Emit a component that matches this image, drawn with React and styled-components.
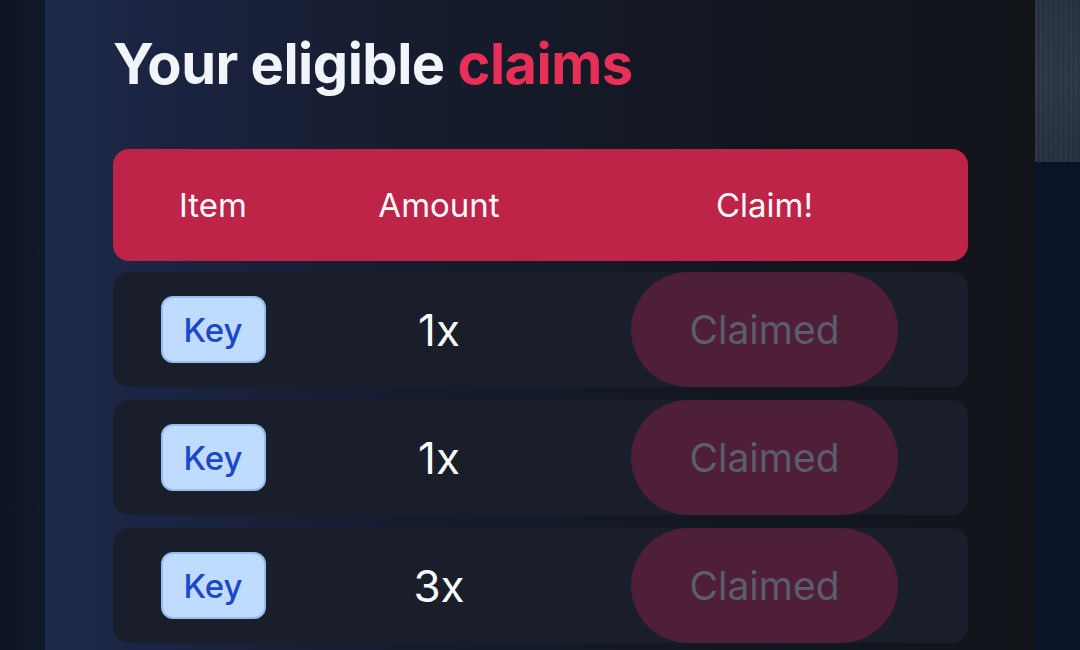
import React from 'react';
import styled, { createGlobalStyle } from 'styled-components';

const Global = createGlobalStyle`
  html, body { margin: 0; padding: 0; background: #0e1422; }
  body { font-family: Inter, "Noto Sans", sans-serif; }
`;

const claims = [
  { item: 'Key', amount: 1 },
  { item: 'Key', amount: 1 },
  { item: 'Key', amount: 3 },
];

const Page = styled.div`
  display: flex;
  width: 1080px;
  height: 650px;
  overflow: hidden;
`;

const LeftStrip = styled.div`
  width: 45px;
  flex: none;
  background: linear-gradient(90deg, #0d1320 0%, #111a2c 100%);
`;

const RightStrip = styled.div`
  width: 45px;
  flex: none;
  display: flex;
  flex-direction: column;
  background: #0b1329;
`;

const Texture = styled.div`
  height: 162px;
  background:
    repeating-linear-gradient(90deg, rgba(255,255,255,0.03) 0 2px, transparent 2px 5px),
    linear-gradient(180deg, #263041 0%, #2c3546 50%, #252e3e 100%);
`;

const Panel = styled.main`
  flex: 1;
  padding: 24px 0 0 68px;
  background: linear-gradient(90deg, #1e2a4b 0%, #1a2340 12%, #161c2c 40%, #121620 70%, #111419 100%);
`;

const Title = styled.h1`
  margin: 0 0 44px;
  font-size: 56px;
  line-height: 81px;
  font-weight: 700;
  color: #f1f5f9;
  letter-spacing: -0.5px;
`;

const Accent = styled.span`
  color: #e72f58;
`;

const Table = styled.div`
  width: 855px;
  display: flex;
  flex-direction: column;
  gap: 13px;
`;

const Row = styled.div`
  display: grid;
  grid-template-columns: 200px 252px 399px;
  align-items: center;
  height: ${p => (p.$head ? '112px' : '115px')};
  border-radius: 16px;
  background: ${p => (p.$head ? '#be2448' : '#1a1e2a')};
  margin-bottom: ${p => (p.$head ? '-2px' : '0')};
`;

const Cell = styled.div`
  display: flex;
  justify-content: center;
  align-items: center;
  height: 100%;
  color: #f8fafc;
  font-size: ${p => (p.$head ? '33px' : '44px')};
`;

const Badge = styled.span`
  box-sizing: border-box;
  display: inline-flex;
  align-items: center;
  justify-content: center;
  width: 105px;
  height: 67px;
  border: 2px solid #93bdf3;
  border-radius: 12px;
  background: #bfdbfe;
  color: #1d48c8;
  font-size: 33px;
  font-weight: 500;
`;

const ClaimedPill = styled.button`
  box-sizing: border-box;
  width: 267px;
  height: 100%;
  border: none;
  border-radius: 58px;
  background: #4f1f37;
  color: #5b5d6c;
  font-family: inherit;
  font-size: 39px;
  cursor: not-allowed;
`;

const App = () => (
  <Page>
    <Global />
    <LeftStrip />
    <Panel>
      <Title>
        Your eligible <Accent>claims</Accent>
      </Title>
      <Table>
        <Row $head>
          <Cell $head>Item</Cell>
          <Cell $head>Amount</Cell>
          <Cell $head>Claim!</Cell>
        </Row>
        {claims.map((c, i) => (
          <Row key={i}>
            <Cell>
              <Badge>{c.item}</Badge>
            </Cell>
            <Cell>{c.amount}x</Cell>
            <Cell>
              <ClaimedPill disabled>Claimed</ClaimedPill>
            </Cell>
          </Row>
        ))}
      </Table>
    </Panel>
    <RightStrip>
      <Texture />
    </RightStrip>
  </Page>
);

export default App;
